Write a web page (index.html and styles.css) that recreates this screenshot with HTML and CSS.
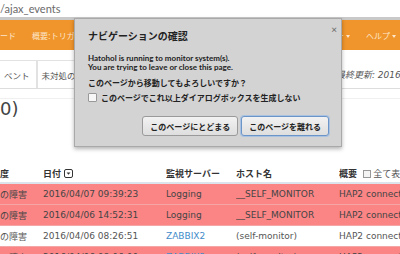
FILE: index.html
```html
<!DOCTYPE html>
<html lang="ja">

<head>
    <meta charset="UTF-8">
    <title>Hatohol - ajax_events</title>
    <link rel="stylesheet" href="styles.css">
</head>

<body>

    <!-- Address bar -->
    <div class="urlbar">
        <span class="url">/ajax_events</span>
    </div>

    <!-- Navbar -->
    <div class="navbar">
        <span class="nav-item">ード</span>
        <span class="nav-item">概要:トリガー</span>
        <span class="nav-right">
            <span class="nav-item">ユーザー<span class="caret"></span></span>
            <span class="nav-item">ヘルプ<span class="caret"></span></span>
        </span>
    </div>

    <!-- Tabs -->
    <div class="tabsRow">
        <div class="tab">ベント</div>
        <div class="tab">未対処の重要なイベント</div>
        <span class="lastUpdate">最終更新: 2016/04/07 09:40:00</span>
    </div>
    <div class="tabsFoot"></div>

    <h2 class="pageTitle">0)</h2>

    <table class="events">
        <thead>
            <tr>
                <th class="colSeverity">度</th>
                <th class="colTime">日付 <svg class="sortIcon" width="9" height="9" viewBox="0 0 9 9">
                        <rect x="0.5" y="0.5" width="8" height="8" rx="1.5" fill="#fff" stroke="#333" />
                        <path d="M2.6 3.4 L6.4 3.4 L4.5 5.8 Z" fill="#333" />
                    </svg></th>
                <th class="colServer">監視サーバー</th>
                <th class="colHost">ホスト名</th>
                <th class="colDesc">概要 <span class="showAll"><span class="tinyBox"></span>全て表示</span></th>
            </tr>
        </thead>
        <tbody>
            <tr class="problem">
                <td>の障害</td>
                <td>2016/04/07 09:39:23</td>
                <td>Logging</td>
                <td>__SELF_MONITOR</td>
                <td>HAP2 connection</td>
            </tr>
            <tr class="problem">
                <td>の障害</td>
                <td>2016/04/06 14:52:31</td>
                <td>Logging</td>
                <td>__SELF_MONITOR</td>
                <td>HAP2 connection</td>
            </tr>
            <tr>
                <td>の障害</td>
                <td>2016/04/06 08:26:51</td>
                <td><a href="#">ZABBIX2</a></td>
                <td>(self-monitor)</td>
                <td>HAP2 connection</td>
            </tr>
            <tr class="problem">
                <td>の障害</td>
                <td>2016/04/06 08:06:00</td>
                <td><a href="#">ZABBIX2</a></td>
                <td>(self-monitor)</td>
                <td>HAP2 connection</td>
            </tr>
        </tbody>
    </table>

    <!-- Leave page dialog -->
    <div class="dialog">
        <div class="dialogHead">
            <span class="dialogTitle">ナビゲーションの確認</span>
            <span class="dialogClose">×</span>
        </div>
        <p class="dialogMsg">Hatohol is running to monitor system(s).<br>You are trying to leave or close this page.</p>
        <p class="dialogAsk">このページから移動してもよろしいですか？</p>
        <label class="dialogCheck"><span class="checkBox"></span>このページでこれ以上ダイアログボックスを生成しない</label>
        <div class="dialogButtons">
            <button class="btn">このページにとどまる</button>
            <button class="btn btnFocus">このページを離れる</button>
        </div>
    </div>

</body>

</html>
```

FILE: styles.css
```css
body {
    margin: 0;
    width: 400px;
    height: 254px;
    overflow: hidden;
    position: relative;
    font-family: "DejaVu Sans", "Noto Sans CJK JP", sans-serif;
    background-color: #fff;
    color: #333;
}

/* Address bar */
.urlbar {
    height: 17px;
    background-color: #fff;
    border-bottom: 3px solid #c9c9c9;
    display: flex;
    align-items: center;
}

.url {
    font-family: "Lato", sans-serif;
    font-size: 11px;
    color: #6a6a6a;
}

/* Navbar */
.navbar {
    height: 30px;
    background-color: #f0952b;
    display: flex;
    align-items: center;
    font-size: 8px;
    color: #fde6cc;
}

.nav-item {
    margin-right: 16px;
    white-space: nowrap;
}

.nav-right {
    margin-left: auto;
    display: flex;
    margin-right: -12px;
}

.caret {
    display: inline-block;
    margin-left: 2px;
    vertical-align: middle;
    border-top: 3px solid #fde6cc;
    border-left: 2.5px solid transparent;
    border-right: 2.5px solid transparent;
}

/* Tabs */
.tabsRow {
    height: 28px;
    margin-top: 10px;
    display: flex;
    align-items: stretch;
    border-bottom: 1px solid #ddd;
    position: relative;
    margin-left: -1px;
}

.tab {
    font-size: 8.5px;
    color: #555;
    padding: 0 6px 0 4px;
    border: 1px solid #e2e2e2;
    border-bottom: none;
    display: flex;
    align-items: center;
    white-space: nowrap;
}

.lastUpdate {
    margin-left: auto;
    font-size: 9px;
    font-style: italic;
    color: #555;
    align-self: center;
    white-space: nowrap;
    margin-right: -73px;
}

.tabsFoot {
    height: 9px;
    border-bottom: 1px solid #f0f0f0;
}

.pageTitle {
    margin: 0;
    height: 65px;
    font-size: 18px;
    font-weight: normal;
    line-height: 20px;
    color: #444;
    padding-top: 0;
}

/* Table */
.events {
    border-collapse: collapse;
    width: 440px;
    font-size: 9px;
    table-layout: fixed;
}

.events th,
.events td {
    height: 20px;
    padding: 0;
    text-align: left;
    white-space: nowrap;
    overflow: hidden;
}

.events th {
    font-weight: bold;
    color: #333;
    border-bottom: 2px solid #dde3ea;
    height: 18px;
}

.events td {
    color: #555;
    border-top: 1px solid #f4a6a6;
}

.colSeverity {
    width: 43px;
}

.colTime {
    width: 123px;
}

.colServer {
    width: 70px;
}

.colHost {
    width: 103px;
}

.sortIcon {
    vertical-align: -1px;
}

.showAll {
    font-weight: normal;
    color: #555;
    margin-left: 3px;
}

.tinyBox {
    display: inline-block;
    width: 6px;
    height: 6px;
    border: 1px solid #999;
    background-color: #f4f4f4;
    margin-right: 2px;
    vertical-align: -1px;
}

.problem td {
    background-color: #fb8585;
    color: #444;
}

.events tbody tr:first-child td {
    border-top: none;
}

.events a {
    color: #428bca;
    text-decoration: none;
}

/* Dialog */
.dialog {
    position: absolute;
    left: 74px;
    top: 18px;
    width: 268px;
    height: 129px;
    background-color: #d3d3d3;
    border: 1px solid #a9a9a9;
    box-shadow: 0 2px 4px rgba(0, 0, 0, 0.3);
    padding: 0 13px;
    box-sizing: border-box;
    font-family: "Lato", "Noto Sans CJK JP", sans-serif;
    color: #222;
}

.dialogHead {
    display: flex;
    justify-content: space-between;
    align-items: center;
    height: 28px;
}

.dialogTitle {
    font-size: 10px;
    font-weight: bold;
    padding-top: 4px;
}

.dialogClose {
    font-size: 10px;
    color: #666;
    margin-right: -9px;
    margin-top: -9px;
}

.dialogMsg {
    margin: 7px 0 0;
    font-size: 8px;
    font-weight: bold;
    line-height: 9px;
}

.dialogAsk {
    margin: 6px 0 0;
    font-size: 8px;
    font-weight: bold;
    line-height: 10px;
}

.dialogCheck {
    display: flex;
    align-items: center;
    margin-top: 4px;
    font-size: 8px;
    font-weight: bold;
}

.checkBox {
    width: 7px;
    height: 7px;
    border: 1px solid #999;
    border-radius: 1px;
    background-color: #f7f7f7;
    margin-right: 4px;
}

.dialogButtons {
    display: flex;
    justify-content: flex-end;
    gap: 3px;
    margin-top: 13px;
    margin-right: -1px;
}

.btn {
    font-family: "Lato", "Noto Sans CJK JP", sans-serif;
    font-size: 8px;
    font-weight: bold;
    color: #222;
    height: 20px;
    padding: 0 7px;
    border: 1px solid #9a9a9a;
    border-radius: 3px;
    background: linear-gradient(#f2f2f2, #dedede);
}

.btnFocus {
    border-color: #6b94c8;
    box-shadow: 0 0 0 1px #a9c2e2;
}
```
